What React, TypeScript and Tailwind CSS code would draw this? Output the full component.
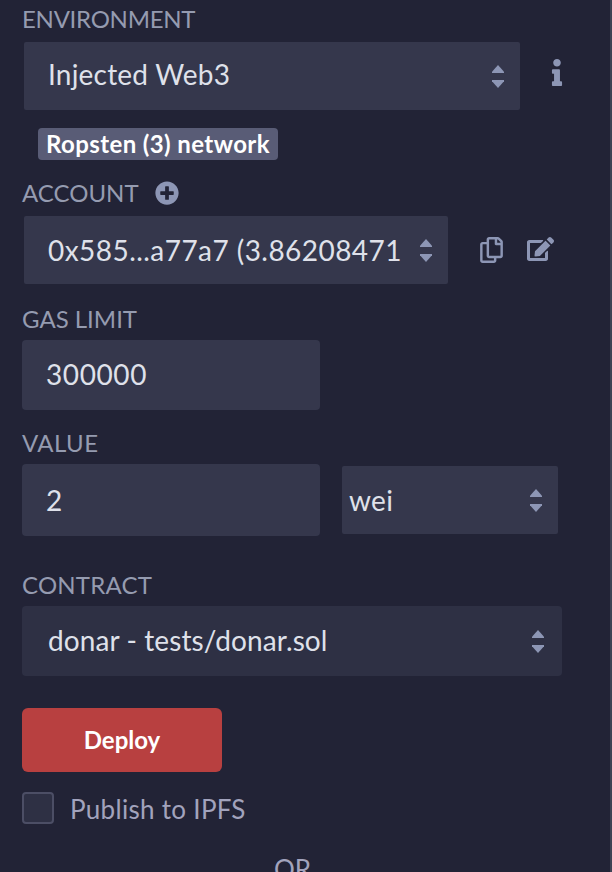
import { FaEdit, FaInfo, FaPlusCircle, FaRegCopy } from "react-icons/fa";

function Carets() {
  return (
    <svg className="h-[23px] w-3 shrink-0" viewBox="0 0 12 23" fill="#8d96b5">
      <path d="M6 0L12 6.8V8H0V6.8Z" />
      <path d="M6 23L12 16.2V15H0V16.2Z" />
    </svg>
  );
}

function Label({ children, className }: { children: string; className: string }) {
  return (
    <div className={`h-[30px] w-max whitespace-nowrap text-[24px] leading-[30px] text-[#959bb0] ${className}`}>
      {children}
    </div>
  );
}

export default function App() {
  return (
    <div className="h-[872px] w-[612px] overflow-hidden border-r-2 border-[#3d4354] bg-[#222336] pt-1 pl-[22px] font-[Lato,'Open_Sans',sans-serif] text-[28px] leading-[34px] text-[#dfe1ea]">
      <Label className="tracking-[-0.27px]">ENVIRONMENT</Label>
      <div className="mt-2 flex items-center pl-0.5">
        <div className="flex h-[68px] w-[496px] items-center justify-between rounded-[2px] bg-[#35374c] pr-4 pl-6">
          <span className="-mt-1 tracking-[0.2px]">Injected Web3</span>
          <Carets />
        </div>
        <FaInfo className="-mt-2 ml-6 h-[27px] w-[26px] text-[#8d96b5]" />
      </div>

      <div className="mt-[18px] ml-4 flex h-8 w-60 items-center rounded-[4px] bg-[#595c76] pl-2 text-[24px] font-bold tracking-[0.4px] whitespace-nowrap text-white">
        <span>Ropsten (3) network</span>
      </div>

      <div className="mt-[18px] flex h-[30px] items-center">
        <Label className="w-[116px]">ACCOUNT</Label>
        <FaPlusCircle className="ml-4 size-6 text-[#8d96b5]" />
      </div>
      <div className="mt-2 flex items-center pl-0.5">
        <div className="flex h-[68px] w-[424px] items-center justify-between rounded-[2px] bg-[#35374c] pr-4 pl-6">
          <span className="tracking-[0.45px] whitespace-nowrap">0x585...a77a7 (3.86208471</span>
          <Carets />
        </div>
        <FaRegCopy className="ml-8 h-[26px] w-[23px] text-[#8d96b5]" />
        <FaEdit className="-mt-0.5 ml-6 h-6 w-[27px] text-[#8d96b5]" />
      </div>

      <Label className="mt-5">GAS LIMIT</Label>
      <div className="mt-1.5 flex h-[70px] w-[298px] items-center rounded-[4px] bg-[#35374c] pl-6">
        <span className="-mt-0.5 tracking-[0.6px]">300000</span>
      </div>

      <Label className="mt-[18px] tracking-[0.4px]">VALUE</Label>
      <div className="mt-1.5 flex items-center gap-[22px]">
        <div className="flex h-[72px] w-[298px] items-center rounded-[4px] bg-[#35374c] pl-6">
          <span>2</span>
        </div>
        <div className="flex h-[68px] w-[216px] items-center justify-between rounded-[2px] bg-[#35374c] pr-4 pl-[7px]">
          <span className="tracking-[0.3px]">wei</span>
          <Carets />
        </div>
      </div>

      <Label className="mt-[34px] tracking-[0.2px]">CONTRACT</Label>
      <div className="mt-1.5 flex h-[70px] w-[540px] items-center justify-between rounded-[4px] bg-[#2e3044] pr-[18px] pl-[26px]">
        <span className="-mt-0.5 tracking-[0.1px]">donar - tests/donar.sol</span>
        <Carets />
      </div>

      <button className="mt-8 flex h-16 w-[200px] items-center justify-center rounded-[6px] bg-[#b84040] text-[24px] font-bold text-white">
        <span>Deploy</span>
      </button>

      <div className="mt-5 flex h-8 items-center text-[26px] text-[#a2a3bd]">
        <div className="size-8 rounded-[4px] border-2 border-[#4c4e65] bg-[#2e3044]" />
        <span className="mt-0.5 ml-4 tracking-[0.3px]">Publish to IPFS</span>
      </div>
      <div className="mt-[28px] pl-[252px] text-[26px] text-[#a2a3bd]">OR</div>
    </div>
  );
}
